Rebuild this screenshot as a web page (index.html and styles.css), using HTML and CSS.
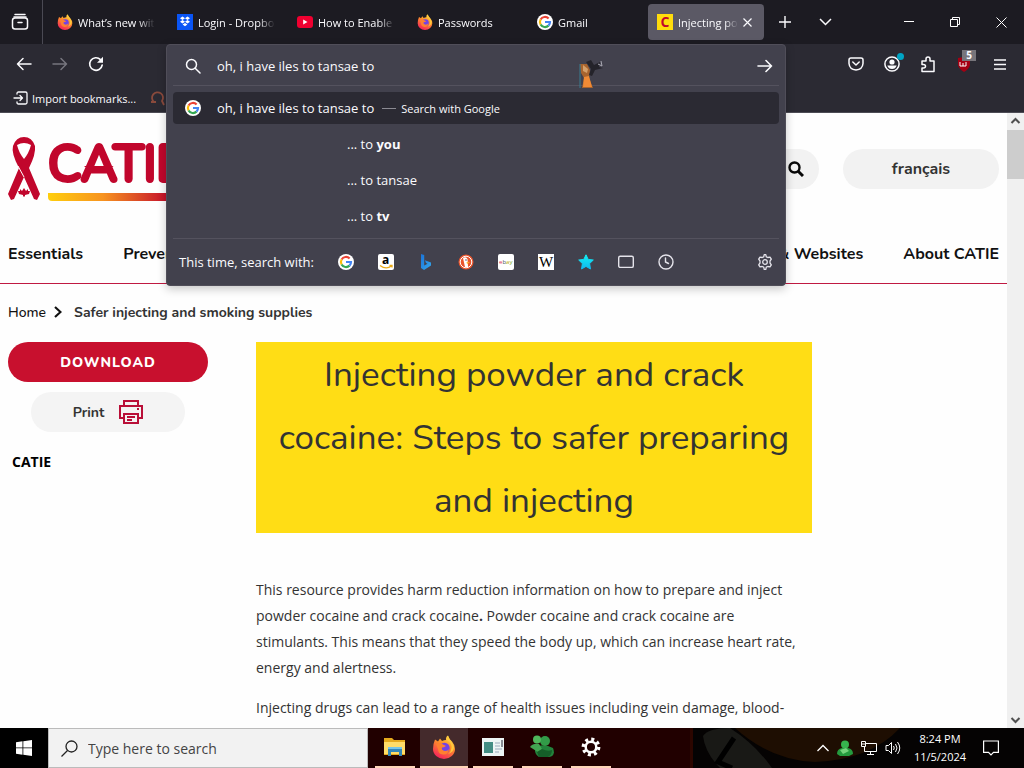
FILE: index.html
```html
<!DOCTYPE html>
<html lang="en">
<head>
<meta charset="utf-8">
<title>Injecting powder and crack cocaine</title>
<link rel="stylesheet" href="styles.css">
</head>
<body>
<svg class="defs" width="0" height="0" aria-hidden="true">
  <defs>
    <linearGradient id="flame" x1=".8" y1="0" x2=".3" y2="1"><stop offset="0" stop-color="#ffe14a"/><stop offset=".4" stop-color="#ff9328"/><stop offset="1" stop-color="#f5205c"/></linearGradient>
    <linearGradient id="star" x1="0" y1="0" x2="0" y2="1"><stop offset="0" stop-color="#12f0f4"/><stop offset="1" stop-color="#10b8f0"/></linearGradient>
    <linearGradient id="bing" x1="0" y1="0" x2="1" y2="1"><stop offset="0" stop-color="#1b73d8"/><stop offset="1" stop-color="#35a8ec"/></linearGradient>
  </defs>
  <symbol id="firefox" viewBox="0 0 24 24">
    <path fill="url(#flame)" d="M3 4.500L6 6.500 8 3.500 10 6Q12 5 14 5Q13.500 2 16 .5Q17 4 20 6.500Q23 10 23 14A11 10 0 0 1 1 14Q1 9 3 4.500Z"/>
    <circle cx="12.500" cy="13" r="5.200" fill="#7542e5"/>
    <path fill="#ff8030" d="M4 9Q8 7 12 10L14 11Q12 12.500 10 12.500Q9 15 13 16Q16 16 17 14Q16 20 11 19.500Q6 19 6 14Z"/>
    <path fill="#ffc83d" d="M15 5Q20 8 19.500 13Q19 17 16 19Q22 17 22 12Q21 8 18 5L16 1Z"/>
  </symbol>
  <symbol id="google" viewBox="0 0 16 16">
    <circle cx="8" cy="8" r="8" fill="#fff"/>
    <g fill="none" stroke-width="2.200">
      <path stroke="#ea4335" d="M3.600 5.500A5 5 0 0 1 11.600 4.500"/>
      <path stroke="#fbbc05" d="M3.600 10.500A5 5 0 0 1 3.600 5.500"/>
      <path stroke="#34a853" d="M3.600 10.500A5 5 0 0 0 11.500 11.600"/>
      <path stroke="#4285f4" d="M8 8H13A5 5 0 0 1 11.500 11.600"/>
    </g>
  </symbol>
  <symbol id="glass" viewBox="0 0 16 16"><g fill="none" stroke="currentColor" stroke-width="1.500" stroke-linecap="round"><circle cx="6.500" cy="6.500" r="5"/><path d="M10.200 10.200L15 15"/></g></symbol>
</svg>

<div class="desktop">
  <section class="browser">
    <header class="tabbar">
      <button class="view" aria-label="Recent browsing"><svg width="18" height="18" viewBox="0 0 18 18" fill="none" stroke="#fbfbfe" stroke-width="1.500" stroke-linecap="round"><path d="M4 1.500H14M3 4H15"/><rect x="1.500" y="5" width="15" height="11" rx="2.500"/><path d="M7 9.500H11"/></svg></button>
      <nav class="tabs" aria-label="Tabs">
        <button class="tab"><svg width="16" height="16"><use href="#firefox"/></svg><span>What’s new with Firefox</span></button>
        <button class="tab"><svg width="16" height="16" viewBox="0 0 16 16"><path fill="#0a55f5" d="M0 0H16V16H0Z"/><path fill="#fff" d="M5.500 2.500L8 4.200 5.500 5.900 3 4.200ZM10.500 2.500L13 4.200 10.500 5.900 8 4.200ZM5.500 6L8 7.700 5.500 9.400 3 7.700ZM10.500 6L13 7.700 10.500 9.400 8 7.700ZM8 9L10.400 10.600 8 12.300 5.600 10.600Z"/></svg><span>Login - Dropbox</span></button>
        <button class="tab"><svg width="16" height="16" viewBox="0 0 16 16"><rect y="2" width="16" height="12" rx="3" fill="#f00030"/><path fill="#fff" d="M6.200 5.500L10.500 8 6.200 10.500Z"/></svg><span>How to Enable Cookies</span></button>
        <button class="tab"><svg width="16" height="16"><use href="#firefox"/></svg><span>Passwords</span></button>
        <button class="tab"><svg width="16" height="16"><use href="#google"/></svg><span>Gmail</span></button>
        <button class="tab active"><b class="c-icon">C</b><span>Injecting powder</span><svg width="9" height="9" viewBox="0 0 9 9" stroke="#fbfbfe" stroke-width="1.200"><path d="M.5.5L8.500 8.500M8.500.5L.5 8.500"/></svg></button>
      </nav>
      <button class="tool" aria-label="New tab"><svg width="12" height="12" viewBox="0 0 12 12" stroke="#fbfbfe" stroke-width="1.400"><path d="M6 0V12M0 6H12"/></svg></button>
      <button class="tool" aria-label="List all tabs"><svg width="13" height="8" viewBox="0 0 13 8" fill="none" stroke="#fbfbfe" stroke-width="1.500"><path d="M1 1L6.500 6.500 12 1"/></svg></button>
      <div class="window-buttons">
        <button aria-label="Minimize"><svg width="10" height="10" viewBox="0 0 10 10" stroke="#fff"><path d="M0 4.500H10"/></svg></button>
        <button aria-label="Restore"><svg width="10" height="10" viewBox="0 0 10 10" stroke="#fff" fill="none"><path d="M.5 2.500H7.500V9.500H.5ZM2.500 2.500V.5H9.500V7.500H7.500"/></svg></button>
        <button aria-label="Close"><svg width="11" height="11" viewBox="0 0 11 11" stroke="#fff"><path d="M.5.5L10.500 10.500M10.500.5L.5 10.500"/></svg></button>
      </div>
    </header>

    <div class="toolbar">
      <div class="history">
        <button aria-label="Back"><svg width="16" height="14" viewBox="0 0 16 14" fill="none" stroke="#fbfbfe" stroke-width="1.500" stroke-linecap="round" stroke-linejoin="round"><path d="M15 7H1.500M7 1.500L1.500 7 7 12.500"/></svg></button>
        <button aria-label="Forward" disabled><svg width="16" height="14" viewBox="0 0 16 14" fill="none" stroke="#77767f" stroke-width="1.500" stroke-linecap="round" stroke-linejoin="round"><path d="M1 7H14.500M9 1.500L14.500 7 9 12.500"/></svg></button>
        <button aria-label="Reload"><svg width="16" height="16" viewBox="0 0 16 16" fill="none" stroke="#fbfbfe" stroke-width="1.600" stroke-linecap="round"><path d="M14.200 9A6.300 6.300 0 1 1 12.500 3.600L14 5"/><path fill="#fbfbfe" stroke="none" d="M15 .8V6.800H9Z"/></svg></button>
      </div>
      <div class="urlbar">
        <div class="panel">
          <form class="query">
            <svg width="16" height="16"><use href="#glass"/></svg>
            <input type="text" aria-label="Search with Google or enter address" value="oh, i have iles to tansae to">
            <button type="button" aria-label="Go"><svg width="16" height="14" viewBox="0 0 16 14" fill="none" stroke="#fbfbfe" stroke-width="1.600" stroke-linecap="round" stroke-linejoin="round"><path d="M1 7H14.500M9 1.500L14.500 7 9 12.500"/></svg></button>
            <svg class="pointer" width="26" height="32" viewBox="0 0 26 32"><path fill="#a8642e" d="M1 5H8L11 11 10 19 14 29H3L5 19 2 14Z"/><path fill="#f08a35" d="M5 18L10 17 13 28H4Z"/><path fill="#d4a06b" d="M4 6L9 10 8 14 4 12Z"/><path fill="#24232a" d="M7 3L12 1 15 6 21 3 20 8 24 9 16 11 13 17 10 16 12 10Z"/><path d="M19 5L23 7 22 2" stroke="#aaa9b3" fill="none"/><path d="M1 5V29" stroke="#397d91"/></svg>
          </form>
          <div class="result selected"><svg width="16" height="16"><use href="#google"/></svg><span>oh, i have iles to tansae to</span><i></i><small>Search with Google</small></div>
          <ul class="suggestions">
            <li>... to <b>you</b></li>
            <li>... to tansae</li>
            <li>... to <b>tv</b></li>
          </ul>
          <div class="engines">
            <span>This time, search with:</span>
            <button aria-label="Google"><svg width="16" height="16"><use href="#google"/></svg></button>
            <button aria-label="Amazon"><svg width="16" height="16" viewBox="0 0 16 16"><rect width="16" height="16" rx="2" fill="#fff"/><text x="4" y="10" class="amazon">a</text><path d="M2 11.500Q8 16 13.500 12M11.500 11.500H14V13.500" stroke="#e9aa18" stroke-width="1.300" fill="none"/></svg></button>
            <button aria-label="Bing"><svg width="16" height="16" viewBox="0 0 16 16"><path fill="url(#bing)" d="M3 0L6.200 1.100V11.500L9.500 9.800 8 9 6.900 6.200 13 8.400V11.500L6 16 3 14Z"/></svg></button>
            <button aria-label="DuckDuckGo"><svg width="16" height="16" viewBox="0 0 16 16"><circle cx="8" cy="8" r="7.500" fill="#e9552d"/><circle cx="8" cy="8" r="5.800" fill="none" stroke="#fff"/><path fill="#fff" d="M5 4Q8 2 9.500 5L10 13H7Z"/><path fill="#f9b52a" d="M8.500 8L12 8.300 9 10Z"/><circle cx="8" cy="6" r=".7" fill="#334"/></svg></button>
            <button aria-label="eBay"><svg width="16" height="16" viewBox="0 0 16 16"><rect width="16" height="16" rx="2" fill="#fff"/><text x="1" y="10" class="ebay"><tspan fill="#d35">e</tspan><tspan fill="#456">b</tspan><tspan fill="#ba0">a</tspan><tspan fill="#7a2">y</tspan></text></svg></button>
            <button aria-label="Wikipedia"><svg width="16" height="16" viewBox="0 0 16 16"><rect width="16" height="16" fill="#fff"/><text x="1" y="13" class="wiki">W</text></svg></button>
            <button aria-label="Bookmarks"><svg width="16" height="16" viewBox="0 0 16 16"><path fill="url(#star)" stroke="url(#star)" stroke-linejoin="round" d="M8 .8L10.200 5.400 15.300 6 11.600 9.600 12.500 15 8 12.400 3.500 15 4.400 9.600 .7 6 5.800 5.400Z"/></svg></button>
            <button aria-label="Tabs"><svg width="16" height="16" viewBox="0 0 16 16"><rect x=".7" y="2.200" width="14.600" height="11.200" rx="1.500" fill="none" stroke="#e5e4eb" stroke-width="1.400"/></svg></button>
            <button aria-label="History"><svg width="16" height="16" viewBox="0 0 16 16" fill="none" stroke="#e5e4eb" stroke-width="1.400" stroke-linecap="round"><circle cx="8" cy="8" r="7"/><path d="M7.500 4V8L10.500 9.500"/></svg></button>
            <button class="gear" aria-label="Change search settings"><svg width="16" height="16" viewBox="0 0 16 16" fill="none" stroke="#e5e4eb" stroke-width="1.300" stroke-linejoin="round"><path d="M6.700 2.800L7.200.7H8.800L9.300 2.800 10.800 3.500 13 3.100 14.300 5.200 13 7 13 9 14.300 10.800 13 12.900 10.800 12.500 9.300 13.200 8.800 15.300H7.200L6.700 13.200 5.200 12.500 3 12.900 1.700 10.800 3 9V7L1.700 5.200 3 3.100 5.200 3.500Z"/><circle cx="8" cy="8" r="2.300"/></svg></button>
          </div>
        </div>
      </div>
      <div class="extensions">
        <button aria-label="Save to Pocket"><svg width="16" height="16" viewBox="0 0 16 16" fill="none" stroke="#fbfbfe" stroke-width="1.500" stroke-linecap="round" stroke-linejoin="round"><path d="M3 2H13Q15 2 15 4V7.500Q14.500 13.500 8 14 1.500 13.500 1 7.500V4Q1 2 3 2ZM4.800 6L8 9 11.200 6"/></svg></button>
        <button aria-label="Account"><svg width="16" height="16" viewBox="0 0 16 16"><circle cx="8" cy="8" r="7.100" fill="none" stroke="#fbfbfe" stroke-width="1.500"/><circle cx="8" cy="6" r="2.600" fill="#fbfbfe"/><path fill="#fbfbfe" d="M3.300 9.500H12.700Q11.500 13 8 13 4.500 13 3.300 9.500Z"/></svg><i class="dot"></i></button>
        <button aria-label="Extensions"><svg width="16" height="17" viewBox="0 0 16 17" fill="none" stroke="#fbfbfe" stroke-width="1.500" stroke-linejoin="round"><path d="M2 5H6V3Q6 1 8 1 10 1 10 3V5H14V15.500H2V12H3.500Q5.500 12 5.500 10.300 5.500 8.500 3.500 8.500H2Z"/></svg></button>
        <button aria-label="Content blocker"><svg width="14" height="15" viewBox="0 0 14 15"><path fill="#a40013" d="M1 1L7 0 13 1V8Q12 12 7 15 2 12 1 8Z"/><path d="M3 5V9H6V6M6 9H9V5" stroke="#fff" fill="none"/></svg><span class="count">5</span></button>
        <button aria-label="Menu"><svg width="12" height="11" viewBox="0 0 12 11" stroke="#fbfbfe" stroke-width="1.400"><path d="M0 1H12M0 5.500H12M0 10H12"/></svg></button>
      </div>
    </div>
    <div class="bookmarks">
      <button><svg width="15" height="14" viewBox="0 0 15 14" fill="none" stroke="#fbfbfe" stroke-width="1.300" stroke-linecap="round" stroke-linejoin="round"><path d="M4 3V2.500Q4 1 5.500 1H12.500Q14 1 14 2.500V11.500Q14 13 12.500 13H5.500Q4 13 4 11.500V11M1 7H9.500M7 4.500L9.500 7 7 9.500"/></svg>Import bookmarks...</button>
      <svg width="15" height="15" viewBox="0 0 15 15" fill="none" stroke="#8a4a3c" stroke-width="1.800"><path d="M4 11A5.500 5.500 0 1 1 12 10L14 14M1 11H6"/></svg>
    </div>

    <div class="viewport">
      <div class="site">
        <div class="brand-row">
          <a class="brand" href="#" aria-label="CATIE">
            <svg width="32" height="64" viewBox="0 0 32 64"><path fill="#c1062c" d="M0 57L11 31Q3 16 5 9Q8 0 16 0 24 0 27 9 28 17 21 31L32 57 29 63 26 62 16 40 6 62 3 63Z"/><path fill="#fff" d="M9 8Q16 4 23 8 21 16 16 22 11 16 9 8Z"/><path d="M10 29L16 40" stroke="#fff"/><path fill="#c1062c" d="M16 51L18 54 20 52 20 54 22 54 21 57 17 58V59.500H15V58L11 57 10 54 12 54V52L14 54Z"/></svg>
            <span class="wordmark">CATIE</span>
          </a>
          <button class="site-search" aria-label="Search"><svg width="16" height="16" viewBox="0 0 16 16" fill="none" stroke="#090909" stroke-width="2.400"><circle cx="6.500" cy="6.500" r="5"/><path stroke-width="3" d="M10.200 10.200L15 15"/></svg></button>
          <a class="language" href="#" lang="fr">français</a>
        </div>
        <nav class="site-nav">
          <a href="#">Essentials</a><a href="#">Prevention</a><a class="push" href="#">&amp; Websites</a><a href="#">About CATIE</a>
        </nav>
        <nav class="crumbs" aria-label="Breadcrumb"><a href="#">Home</a><svg width="8" height="12" viewBox="0 0 8 12" fill="none" stroke="#111" stroke-width="2.200"><path d="M1 1L6.500 6 1 11"/></svg><span>Safer injecting and smoking supplies</span></nav>
        <div class="columns">
          <aside>
            <button class="download">DOWNLOAD</button>
            <button class="print">Print <svg width="24" height="24" viewBox="0 0 24 24" fill="none" stroke="#b90f38" stroke-width="2"><path d="M5 6V1H19V6M5 18H1V6H23V18H19M5 14H19V23H5ZM8 17H16M8 20H13M18 9H20"/></svg></button>
            <strong>CATIE</strong>
          </aside>
          <main>
            <h1>Injecting powder and crack cocaine: Steps to safer preparing and injecting</h1>
            <p>This resource provides harm reduction information on how to prepare and inject powder cocaine and crack cocaine<b>.</b> Powder cocaine and crack cocaine are stimulants. This means that they speed the body up, which can increase heart rate, energy and alertness.</p>
            <p>Injecting drugs can lead to a range of health issues including vein damage, blood-borne infections and abscesses, and can increase the risk of blood clots and</p>
          </main>
        </div>
      </div>
      <div class="scrollbar" aria-hidden="true">
        <svg width="17" height="17" viewBox="0 0 17 17" fill="none" stroke="#505050" stroke-width="2"><path d="M4.500 10L8.500 6 12.500 10"/></svg>
        <div class="thumb"></div>
        <svg width="17" height="17" viewBox="0 0 17 17" fill="none" stroke="#505050" stroke-width="2"><path d="M4.500 7L8.500 11 12.500 7"/></svg>
      </div>
    </div>
  </section>

  <footer class="taskbar">
    <button class="start" aria-label="Start"><svg width="16" height="16" viewBox="0 0 16 16" fill="#fff"><path d="M0 2.200L6.500 1.300V7.500H0ZM7.300 1.200L16 0V7.500H7.300ZM0 8.300H6.500V14.700L0 13.800ZM7.300 8.300H16V16L7.300 14.800Z"/></svg></button>
    <label class="search"><svg width="17" height="17" viewBox="0 0 17 17" fill="none" stroke="#222" stroke-width="1.300"><circle cx="10.500" cy="6.500" r="5.500"/><path d="M6.500 10.500L.5 16.500"/></svg><input type="text" placeholder="Type here to search" aria-label="Type here to search"></label>
    <div class="apps">
      <button aria-label="File Explorer"><svg width="22" height="20" viewBox="0 0 22 20"><path fill="#e5a91c" d="M0 1H8L10 3H21V18H0Z"/><path fill="#ffdc68" d="M0 5H21V17H0Z"/><path fill="#3387b9" d="M4 10H18V19H15V15H7V19H4Z"/><path fill="#76c5e8" d="M4 10H18V12H4Z"/></svg></button>
      <button class="current" aria-label="Firefox"><svg width="24" height="24"><use href="#firefox"/></svg></button>
      <button aria-label="Application"><svg width="22" height="18" viewBox="0 0 22 18"><path fill="#edf5f5" d="M0 0H22V18H0Z"/><path fill="#438d84" d="M2 4H11V15H2Z"/><path d="M13 5H18M13 8H18M13 11H20M13 14H17" stroke="#9ab"/><path d="M20 2V9" stroke="#223"/></svg></button>
      <button aria-label="Messenger"><svg width="24" height="24" viewBox="0 0 24 24"><path fill="#22823b" d="M5 12Q14 8 23 13 26 21 19 22H9Q4 19 5 12Z"/><circle cx="15" cy="6" r="5" fill="#329b48"/><path fill="#43a552" d="M0 12Q3 8 9 9L12 14 8 17Q3 14 0 12Z"/><circle cx="7" cy="4.500" r="4" fill="#4fb85c"/><path fill="#155f29" d="M7 17L12 14Q18 17 22 15 22 20 18 22H9Z"/></svg></button>
      <button aria-label="Settings"><svg width="20" height="20" viewBox="0 0 20 20"><circle cx="10" cy="10" r="7.700" fill="none" stroke="#fff" stroke-width="3.400" stroke-dasharray="3 3.047"/><circle cx="10" cy="10" r="5.300" fill="none" stroke="#fff" stroke-width="2.500"/></svg></button>
    </div>
    <div class="tray">
      <svg class="wallpaper" viewBox="0 0 334 40" preserveAspectRatio="none" aria-hidden="true"><path fill="#050303" d="M0 0H334V40H0Z"/><path fill="#2c0600" d="M0 0H3V40H0Z"/><path fill="#191916" d="M13 8Q18 0 40 0 65 16 82 40H30Q15 25 13 8Z"/><path fill="#1e0e02" d="M45 0H210Q180 32 125 34 80 32 45 0Z"/><path d="M44 10L28 34 42 40" fill="none" stroke="#000" stroke-width="5"/></svg>
      <button aria-label="Show hidden icons"><svg width="12" height="8" viewBox="0 0 12 8" fill="none" stroke="#fff" stroke-width="1.300"><path d="M.5 7L6 1.500 11.500 7"/></svg></button>
      <button aria-label="Messenger status"><svg width="16" height="16" viewBox="0 0 16 16"><circle cx="8" cy="4.500" r="4" fill="#36b34d"/><path fill="#249a3e" d="M0 14Q0 9 5 8H11Q16 9 16 14L12 16H3Z"/><path fill="#75d47d" d="M3 10L9 8 12 11 6 14Z"/></svg></button>
      <button aria-label="Network"><svg width="16" height="16" viewBox="0 0 16 16" fill="none" stroke="#fff"><path d="M5 3.500H15.500V11.500H3.500V7M9.500 11.500V14.500M6 14.500H13M.5 1.500H4.500V6.500H.5ZM.5 4H4.500"/></svg></button>
      <button aria-label="Volume"><svg width="16" height="14" viewBox="0 0 16 14" fill="none" stroke="#fff"><path d="M1 4.500H3.500L6.500 1.500V12.500L3.500 9.500H1ZM8.500 5Q10 7 8.500 9M10.500 3Q13.500 7 10.500 11M12.500 1Q17 7 12.500 13"/></svg></button>
      <time datetime="2024-11-05T20:24">8:24 PM<br>11/5/2024</time>
      <button class="notices" aria-label="Notifications"><svg width="16" height="16" viewBox="0 0 16 16" fill="none" stroke="#fff" stroke-width="1.200"><path d="M.6 1H15.400V12.400H10.500L8 15 5.500 12.400H.6Z"/></svg></button>
    </div>
  </footer>
</div>
</body>
</html>
```
FILE: styles.css
```css
* { box-sizing: border-box; }
body { margin: 0; font-family: "Segoe UI", "Open Sans", sans-serif; }
button { border: 0; padding: 0; background: none; color: inherit; font: inherit; }
button, a { cursor: pointer; }
a { color: inherit; text-decoration: none; }
input { min-width: 0; border: 0; padding: 0; outline: 0; background: none; color: inherit; font: inherit; }
svg { display: block; flex: none; }
.defs { position: absolute; }

.desktop { display: flex; flex-direction: column; height: 100vh; overflow: hidden; }
.browser { display: flex; flex: 1; flex-direction: column; min-height: 0; background: #2b2a33; color: #fbfbfe; }

.tabbar { display: flex; align-items: center; height: 44px; background: #1c1b22; font-size: 11px; }
.view { display: grid; place-items: center; width: 43px; padding-right: 3px; height: 44px; border-right: 1px solid #4a4953; }
.tabs { display: flex; gap: 4px; padding: 0 1px 0 5px; min-width: 0; }
.tab { display: flex; align-items: center; gap: 5px; width: 116px; height: 36px; padding: 0 9px; border-radius: 4px; }
.tab span { flex: 1; min-width: 0; overflow: hidden; text-align: left; white-space: nowrap; mask-image: linear-gradient(to right, #000 78%, transparent); }
.tab.active { background: #5b5965; padding-right: 12px; }
.c-icon { width: 16px; height: 16px; background: #ffdc0c; color: #c1062c; font-size: 14px; line-height: 16px; }
.tool { display: grid; place-items: center; width: 40px; height: 40px; }
.window-buttons { display: flex; margin-left: auto; }
.window-buttons button { display: grid; place-items: center; width: 46px; height: 44px; }

.toolbar { display: flex; height: 40px; }
.history { display: flex; align-items: center; gap: 20px; width: 166px; padding-left: 16px; }
.urlbar { position: relative; flex: 1; }
.extensions { display: flex; align-items: center; justify-content: flex-end; gap: 20px; width: 238px; padding-right: 16px; }
.extensions button { position: relative; display: grid; place-items: center; width: 16px; height: 16px; }
.dot { position: absolute; top: -3px; right: -4px; width: 7px; height: 7px; border-radius: 50%; background: #00a5c5; }
.count { position: absolute; top: -6px; right: -4px; width: 14px; height: 11px; background: #77757b; font-size: 10px; font-weight: 700; line-height: 11px; text-align: center; }
.bookmarks { display: flex; align-items: center; gap: 14px; height: 29px; padding-left: 13px; border-bottom: 1px solid #4d4c55; font-size: 11px; }
.bookmarks button { display: flex; align-items: center; gap: 4px; }

.panel { position: absolute; z-index: 2; top: 0; left: 0; right: 0; padding: 1px 6px 0; border: 1px solid #504e59; border-radius: 4px; background: #42414d; box-shadow: 0 3px 10px #00000038; font-size: 13px; }
.query { position: relative; display: flex; align-items: center; gap: 16px; height: 40px; padding: 0 6px 0 12px; border-bottom: 1px solid #54525e; }
.query input { flex: 1; }
.pointer { position: absolute; left: 67%; top: 13px; }
.result { display: flex; align-items: center; height: 32px; margin: 6px 0 0; padding: 0 12px; border-radius: 4px; background: #2b2a33; }
.result svg { margin-right: 16px; }
.result i { width: 14px; height: 1px; margin: 0 5px 0 8px; background: #8b8a92; }
.result small { font-size: 11px; }
.suggestions { margin: 2px 0 4px; padding: 0 0 0 174px; list-style: none; }
.suggestions li { height: 36px; line-height: 36px; }
.engines { display: flex; align-items: center; gap: 24px; height: 47px; padding: 0 6px; border-top: 1px solid #54525e; }
.engines span { white-space: nowrap; }
.gear { margin-left: auto; }
.amazon { font: 700 12px "Open Sans", sans-serif; }
.ebay { font: 6px "Open Sans", sans-serif; }
.wiki { font: 15px "Liberation Serif", serif; }

.viewport { display: flex; flex: 1; min-height: 0; background: #fefefe; color: #333; }
.site { flex: 1; min-width: 0; overflow: hidden; font-family: Nunito, "Open Sans", sans-serif; }
.brand-row { display: flex; align-items: center; height: 112px; padding: 0 8px; }
.brand { display: flex; align-items: center; gap: 8px; }
.wordmark { padding: 0 0 8px; background: linear-gradient(to right, #ffcf0d, #f79320 40%, #c1062c 90%) bottom / 100% 8px no-repeat; border-radius: 4px; color: #c1062c; font-size: 50px; font-weight: 400; line-height: 56px; -webkit-text-stroke: 4px #c1062c; }
.site-search { display: flex; align-items: center; justify-content: flex-end; width: 160px; height: 40px; margin-left: auto; padding-right: 15px; border-radius: 20px; background: #f2f2f2; }
.language { width: 156px; height: 40px; margin-left: 24px; border-radius: 20px; background: #f2f2f2; font-size: 16px; font-weight: 700; line-height: 40px; text-align: center; }
.site-nav { display: flex; align-items: center; gap: 40px; height: 59px; padding: 0 8px; border-bottom: 1px solid #c01a42; color: #111; font-size: 16px; font-weight: 700; }
.push { margin-left: auto; }
.crumbs { display: flex; align-items: center; gap: 8px; height: 56px; margin-bottom: 2px; padding: 0 8px; font-size: 14px; font-weight: 700; }
.crumbs a { color: #111; font-weight: 500; }
.crumbs span { margin-left: 4px; }
.columns { display: grid; grid-template-columns: 200px minmax(0, 556px); gap: 48px; padding: 0 8px; }
aside { display: flex; flex-direction: column; align-items: center; font-size: 14px; font-weight: 700; }
.download { width: 100%; height: 40px; border-radius: 20px; background: #c8102e; color: #fff; font-weight: 800; letter-spacing: 1px; }
.print { display: flex; align-items: center; justify-content: center; gap: 15px; width: 154px; height: 40px; margin: 10px 0 20px; border-radius: 20px; background: #f4f4f4; }
aside strong { align-self: flex-start; margin-left: 4px; color: #000; font-family: "Open Sans", sans-serif; font-weight: 700; line-height: 20px; }
h1 { margin: 0 0 44px; padding: 1px 10px; background: #ffdd15; font-size: 35px; font-weight: 400; line-height: 63px; text-align: center; }
main p { margin: 0 0 14px; padding-right: 8px; font-family: "Open Sans", sans-serif; font-size: 14px; line-height: 26px; }

.scrollbar { display: flex; flex-direction: column; justify-content: space-between; width: 17px; background: #f0f0f0; }
.thumb { height: 49px; margin-bottom: auto; background: #cdcdcd; }

.taskbar { display: flex; height: 40px; background: #210000; color: #fff; }
.start { display: grid; place-items: center; width: 48px; background: #000; }
.search { display: flex; align-items: center; gap: 10px; width: 320px; padding: 0 12px; border: 1px solid #bbb; background: #f2f2f2; color: #333; font-size: 14px; }
.search input { flex: 1; }
.search input::placeholder { color: #444; opacity: 1; }
.apps { display: flex; gap: 1px; padding-left: 3px; }
.apps button { display: grid; place-items: center; width: 48px; border-bottom: 2px solid #ffd5b8; background-clip: padding-box; }
.apps .current { background-color: #442a2c; }
.apps button:not(.current) { margin: 0 4px; width: 40px; }
.tray { position: relative; display: flex; align-items: center; justify-content: flex-end; gap: 8px; width: 334px; margin-left: auto; padding-right: 25px; }
.tray > * { position: relative; }
.tray .wallpaper { position: absolute; inset: 0; width: 100%; height: 100%; }
.tray time { width: 58px; margin-left: 2px; font-size: 11px; line-height: 18px; text-align: center; white-space: nowrap; }
.notices { margin-left: 6px; }
```
